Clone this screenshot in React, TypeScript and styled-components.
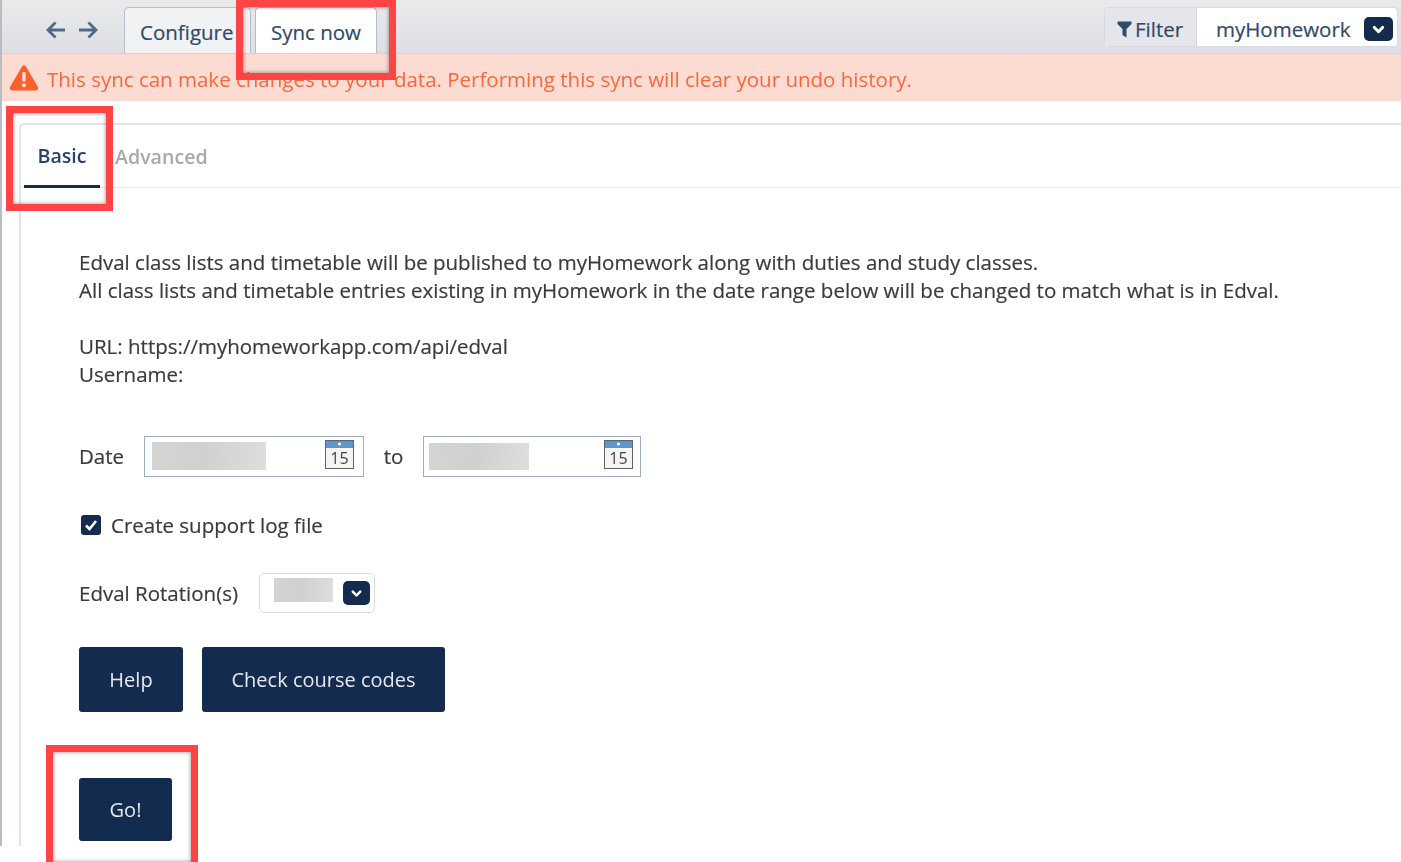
import { ChevronDown } from 'lucide-react';
import styled, { createGlobalStyle } from 'styled-components';

const GlobalStyle = createGlobalStyle`
  html, body {
    margin: 0;
    padding: 0;
    background: #ffffff;
  }
  body {
    font-family: "Open Sans", "Noto Sans", "Liberation Sans", sans-serif;
  }
  * { box-sizing: border-box; }
`;

const navy = '#132b4f';

const Page = styled.div`
  position: relative;
  width: 1401px;
  height: 862px;
  overflow: hidden;
  background: #ffffff;
`;

const Shell = styled.div`
  height: 846px;
  border-left: 2px solid #b9bcc1;
  filter: blur(0.4px);
`;

const TopBar = styled.div`
  display: flex;
  align-items: flex-end;
  height: 54px;
  padding-left: 43px;
  background: linear-gradient(#e9eaec, #dddfe4);
  border-bottom: 1px solid #d0d3d9;
`;

const NavArrows = styled.div`
  display: flex;
  align-items: center;
  gap: 10px;
  height: 46px;
  margin-right: 25px;
  color: #4f6a8a;
`;

const TabStrip = styled.div`
  display: flex;
  gap: 4px;
`;

const PageTab = styled.div<{ $active?: boolean }>`
  display: flex;
  align-items: center;
  justify-content: ${({ $active }) => ($active ? 'center' : 'flex-start')};
  width: ${({ $active }) => ($active ? '122px' : '127px')};
  height: 46px;
  padding-top: 3px;
  padding-left: ${({ $active }) => ($active ? '0' : '15px')};
  background: ${({ $active }) => ($active ? '#ffffff' : '#f0f2f3')};
  border: 1px solid #b4bccd;
  border-bottom: none;
  border-radius: 5px 5px 0 0;
  color: #32496a;
  font-size: 20.5px;
  -webkit-text-stroke: 0.2px #32496a;
  white-space: nowrap;
  overflow: hidden;
`;

const FilterGroup = styled.div`
  display: flex;
  align-items: stretch;
  align-self: flex-start;
  height: 40px;
  margin-top: 7px;
  margin-left: auto;
  margin-right: 3px;
  background: #ffffff;
  border: 1px solid #d8dbe0;
  border-radius: 4px;
`;

const FilterLabel = styled.div`
  display: flex;
  align-items: center;
  gap: 3px;
  width: 92px;
  padding: 4px 0 0 12px;
  background: #e4e6eb;
  border-right: 1px solid #d4d7dd;
  color: #32496a;
  font-size: 20.5px;
  -webkit-text-stroke: 0.2px #32496a;
`;

const FilterValue = styled.div`
  display: flex;
  align-items: center;
  width: 200px;
  padding: 4px 4px 0 19px;
  color: #32496a;
  font-size: 20.5px;
  -webkit-text-stroke: 0.2px #32496a;
`;

const SelectCaret = styled.span`
  display: flex;
  align-items: center;
  justify-content: center;
  width: 29px;
  height: 24px;
  margin-left: auto;
  background: ${navy};
  border-radius: 5px;
  color: #ffffff;
`;

const AlertBar = styled.div`
  display: flex;
  align-items: center;
  gap: 8px;
  height: 47px;
  padding-left: 7px;
  background: #fcdcd2;
  color: #f8683a;
  font-size: 20.5px;
  font-weight: 500;
`;

const AlertText = styled.span`
  padding-top: 3px;
`;

const Panel = styled.div`
  height: 723px;
  margin: 22px 0 0 17px;
  border-top: 2px solid #e2e4ea;
  border-left: 2px solid #e2e4ea;
  border-top-left-radius: 5px;
`;

const SubTabs = styled.div`
  display: flex;
  height: 63px;
  padding-left: 3px;
  border-bottom: 1px solid #e6e8ec;
`;

const SubTab = styled.div<{ $active?: boolean }>`
  display: flex;
  align-items: center;
  justify-content: center;
  width: ${({ $active }) => ($active ? '76px' : 'auto')};
  height: 63px;
  margin-left: ${({ $active }) => ($active ? '0' : '15px')};
  border-bottom: ${({ $active }) => ($active ? `3px solid ${navy}` : 'none')};
  color: ${({ $active }) => ($active ? '#27436b' : '#a9a9a9')};
  font-size: 19.6px;
  font-weight: 600;
`;

const Content = styled.div`
  display: flex;
  flex-direction: column;
  padding: 60px 0 0 58px;
  color: #3b3b3b;
  font-size: 20.5px;
  -webkit-text-stroke: 0.2px #3b3b3b;
`;

const TextLine = styled.div`
  height: 28px;
  line-height: 28px;
  white-space: nowrap;
`;

const InfoBlock = styled.div`
  margin-top: 28px;
`;

const DateRow = styled.div`
  display: flex;
  align-items: center;
  height: 42px;
  margin-top: 47px;
`;

const DateInput = styled.div<{ $width: number; $inset: number; $trail: number }>`
  display: flex;
  align-items: center;
  width: ${({ $width }) => $width}px;
  height: 41px;
  padding: 0 ${({ $trail }) => $trail}px 0 ${({ $inset }) => $inset}px;
  border: 1px solid #9fadc2;
`;

const DateLabel = styled.span`
  width: 65px;
`;

const ToLabel = styled.span`
  width: 59px;
  text-align: center;
`;

const Redacted = styled.div<{ $width: number; $height: number; $raise?: number }>`
  width: ${({ $width }) => $width}px;
  height: ${({ $height }) => $height}px;
  margin-bottom: ${({ $raise }) => $raise ?? 0}px;
  background: linear-gradient(100deg, #d4d4d4, #d0d0d0 45%, #dedede);
`;

const CalendarSlot = styled.svg`
  margin-left: auto;
  margin-bottom: 4px;
  flex-shrink: 0;
`;

const CheckRow = styled.div`
  display: flex;
  align-items: center;
  gap: 10px;
  height: 28px;
  margin-top: 34px;
`;

const CheckBox = styled.span`
  display: flex;
  align-items: center;
  justify-content: center;
  width: 20px;
  height: 20px;
  margin-left: 2px;
  background: ${navy};
  border-radius: 3px;
  color: #ffffff;
`;

const RotationRow = styled.div`
  display: flex;
  align-items: center;
  gap: 21px;
  height: 40px;
  margin-top: 34px;
`;

const RotationSelect = styled.div`
  display: flex;
  align-items: center;
  width: 116px;
  height: 40px;
  padding: 0 4px 0 14px;
  border: 1px solid #d9dce2;
  border-radius: 5px;

  ${SelectCaret} {
    width: 27px;
    height: 24px;
  }
`;

const ButtonRow = styled.div`
  display: flex;
  gap: 19px;
  margin-top: 34px;
`;

const ActionButton = styled.button<{ $width: number; $height: number }>`
  width: ${({ $width }) => $width}px;
  height: ${({ $height }) => $height}px;
  padding: 0;
  background: ${navy};
  border: none;
  border-radius: 3px;
  color: #e6e9ee;
  font-family: inherit;
  font-size: 20px;
  -webkit-text-stroke: 0;
`;

const GoRow = styled.div`
  margin-top: 66px;
`;

const Callout = styled.div<{ $left: number; $top: number; $width: number; $height: number }>`
  position: absolute;
  left: ${({ $left }) => $left}px;
  top: ${({ $top }) => $top}px;
  width: ${({ $width }) => $width}px;
  height: ${({ $height }) => $height}px;
  border: 7px solid #ff4444;
  box-shadow: inset 0 0 4px rgba(0, 0, 0, 0.45);
  pointer-events: none;
`;

function CalendarIcon() {
  return (
    <CalendarSlot width="29" height="29" viewBox="0 0 29 29">
      <rect x="0.5" y="0.5" width="28" height="28" fill="#f4f4f4" stroke="#5f6468" />
      <rect x="1" y="1" width="27" height="7" fill="#5b96cf" />
      <circle cx="14.5" cy="4" r="1.6" fill="#ffffff" />
      <text x="14.5" y="24" textAnchor="middle" fontSize="16" fontFamily="Open Sans, sans-serif" fill="#444444" strokeWidth="0">
        15
      </text>
    </CalendarSlot>
  );
}

function WarningIcon() {
  return (
    <svg width="30" height="27" viewBox="0 0 30 27">
      <path
        d="M15 1.5c1 0 1.8.5 2.3 1.4l11.5 19.8c1 1.8-.2 3.8-2.3 3.8H3.5c-2 0-3.300-2-2.300-3.800L12.700 2.900C13.200 2 14 1.500 15 1.500z"
        fill="#f8602e"
      />
      <rect x="13.300" y="8" width="3.400" height="9.500" rx="1" fill="#fcdcd2" />
      <circle cx="15" cy="21.300" r="2" fill="#fcdcd2" />
    </svg>
  );
}

function ArrowIcon({ flip }: { flip?: boolean }) {
  return (
    <svg width="22" height="20" viewBox="0 0 22 20" style={flip ? { transform: 'scaleX(-1)' } : undefined}>
      <path d="M20 10H3M10.500 2.500 3 10l7.500 7.500" fill="none" stroke="currentColor" strokeWidth="2.800" />
    </svg>
  );
}

function FunnelIcon() {
  return (
    <svg width="15" height="17" viewBox="0 0 15 17">
      <path d="M0.500 0.500h14v2.500L9.500 8v8.500l-4-2.500V8L0.500 3z" fill="#32496a" />
    </svg>
  );
}

export default function App() {
  return (
    <Page>
      <GlobalStyle />
      <Shell>
        <TopBar>
          <NavArrows>
            <ArrowIcon />
            <ArrowIcon flip />
          </NavArrows>
          <TabStrip>
            <PageTab>Configure</PageTab>
            <PageTab $active>Sync now</PageTab>
          </TabStrip>
          <FilterGroup>
            <FilterLabel>
              <FunnelIcon />
              Filter
            </FilterLabel>
            <FilterValue>
              myHomework
              <SelectCaret>
                <ChevronDown size={17} strokeWidth={4} />
              </SelectCaret>
            </FilterValue>
          </FilterGroup>
        </TopBar>
        <AlertBar>
          <WarningIcon />
          <AlertText>This sync can make changes to your data. Performing this sync will clear your undo history.</AlertText>
        </AlertBar>
        <Panel>
          <SubTabs>
            <SubTab $active>Basic</SubTab>
            <SubTab>Advanced</SubTab>
          </SubTabs>
          <Content>
            <TextLine>Edval class lists and timetable will be published to myHomework along with duties and study classes.</TextLine>
            <TextLine>All class lists and timetable entries existing in myHomework in the date range below will be changed to match what is in Edval.</TextLine>
            <InfoBlock>
              <TextLine>URL: https://myhomeworkapp.com/api/edval</TextLine>
              <TextLine>Username:</TextLine>
            </InfoBlock>
            <DateRow>
              <DateLabel>Date</DateLabel>
              <DateInput $width={220} $inset={7} $trail={9}>
                <Redacted $width={114} $height={28} />
                <CalendarIcon />
              </DateInput>
              <ToLabel>to</ToLabel>
              <DateInput $width={218} $inset={5} $trail={7}>
                <Redacted $width={100} $height={27} />
                <CalendarIcon />
              </DateInput>
            </DateRow>
            <CheckRow>
              <CheckBox>
                <svg width="16" height="16" viewBox="0 0 16 16">
                  <path d="M3 8.500 6.500 12 13 4" fill="none" stroke="currentColor" strokeWidth="2.600" />
                </svg>
              </CheckBox>
              Create support log file
            </CheckRow>
            <RotationRow>
              Edval Rotation(s)
              <RotationSelect>
                <Redacted $width={59} $height={24} $raise={7} />
                <SelectCaret>
                  <ChevronDown size={15} strokeWidth={4} />
                </SelectCaret>
              </RotationSelect>
            </RotationRow>
            <ButtonRow>
              <ActionButton $width={104} $height={65}>Help</ActionButton>
              <ActionButton $width={243} $height={65}>Check course codes</ActionButton>
            </ButtonRow>
            <GoRow>
              <ActionButton $width={93} $height={63}>Go!</ActionButton>
            </GoRow>
          </Content>
        </Panel>
      </Shell>
      <Callout $left={236} $top={0} $width={160} $height={80} />
      <Callout $left={6} $top={106} $width={107} $height={105} />
      <Callout $left={46} $top={745} $width={152} $height={124} />
    </Page>
  );
}
